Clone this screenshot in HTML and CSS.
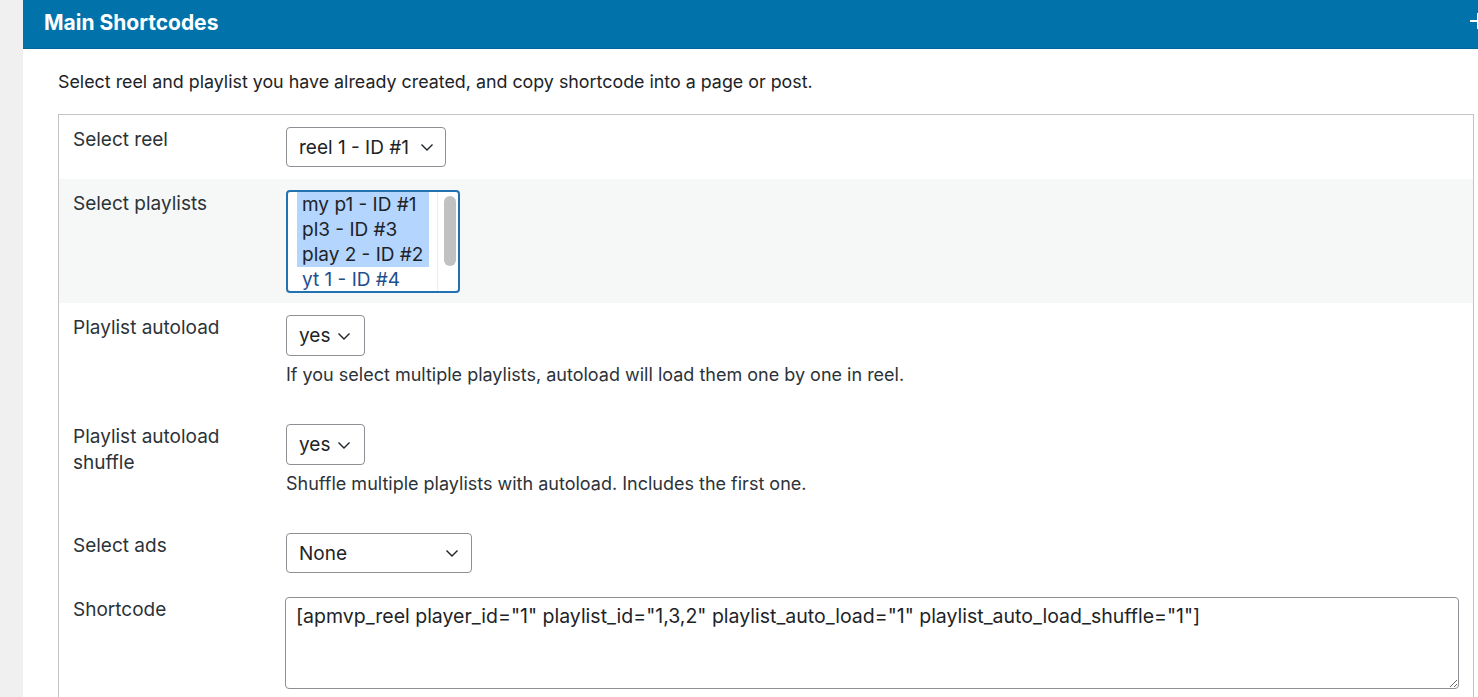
FILE: index.html
```html
<!DOCTYPE html>
<html lang="en">
<head>
    <meta charset="UTF-8">
    <meta name="viewport" content="width=device-width, initial-scale=1.0">
    <title>Main Shortcodes</title>
    <link rel="stylesheet" href="styles.css">
</head>
<body>
    <div class="panel">
        <div class="panel-header">
            <h2>Main Shortcodes</h2>
            <svg class="toggle" width="20" height="20" viewBox="0 0 20 20">
                <path d="M10 2v16M2 10h16" stroke="#fff" stroke-width="2" fill="none"/>
            </svg>
        </div>

        <div class="panel-body">
            <p class="intro">Select reel and playlist you have already created, and copy shortcode into a page or post.</p>

            <table class="form-table">
                <tr>
                    <th>Select reel</th>
                    <td>
                        <div class="select select-reel">
                            <span>reel 1 - ID #1</span>
                            <svg width="16" height="16" viewBox="0 0 16 16"><path d="M2.5 5.5l5.5 5.5 5.5-5.5" stroke="#1d2327" stroke-width="1.4" fill="none"/></svg>
                        </div>
                    </td>
                </tr>
                <tr class="alt">
                    <th>Select playlists</th>
                    <td>
                        <div class="multi">
                            <ul class="options">
                                <li class="selected">my p1 - ID #1</li>
                                <li class="selected">pl3 - ID #3</li>
                                <li class="selected">play 2 - ID #2</li>
                                <li>yt 1 - ID #4</li>
                            </ul>
                            <div class="scrollbar"><div class="thumb"></div></div>
                        </div>
                    </td>
                </tr>
                <tr>
                    <th>Playlist autoload</th>
                    <td>
                        <div class="select select-yes">
                            <span>yes</span>
                            <svg width="16" height="16" viewBox="0 0 16 16"><path d="M2.5 5.5l5.5 5.5 5.5-5.5" stroke="#1d2327" stroke-width="1.4" fill="none"/></svg>
                        </div>
                        <p class="description">If you select multiple playlists, autoload will load them one by one in reel.</p>
                    </td>
                </tr>
                <tr>
                    <th>Playlist autoload shuffle</th>
                    <td>
                        <div class="select select-yes">
                            <span>yes</span>
                            <svg width="16" height="16" viewBox="0 0 16 16"><path d="M2.5 5.5l5.5 5.5 5.5-5.5" stroke="#1d2327" stroke-width="1.4" fill="none"/></svg>
                        </div>
                        <p class="description">Shuffle multiple playlists with autoload. Includes the first one.</p>
                    </td>
                </tr>
                <tr>
                    <th>Select ads</th>
                    <td>
                        <div class="select select-ads">
                            <span>None</span>
                            <svg width="16" height="16" viewBox="0 0 16 16"><path d="M2.5 5.5l5.5 5.5 5.5-5.5" stroke="#1d2327" stroke-width="1.4" fill="none"/></svg>
                        </div>
                    </td>
                </tr>
                <tr>
                    <th>Shortcode</th>
                    <td>
                        <textarea class="shortcode">[apmvp_reel player_id="1" playlist_id="1,3,2" playlist_auto_load="1" playlist_auto_load_shuffle="1"]</textarea>
                    </td>
                </tr>
            </table>
        </div>
    </div>
</body>
</html>
```

FILE: styles.css
```css
html, body {
    overflow: hidden;
}
body {
    margin: 0;
    background: #f0f0f1;
    font-family: Inter, 'Noto Sans', sans-serif;
    font-size: 18px;
    color: #1d2327;
}
.panel {
    margin-left: 23px;
    width: 1486px;
    min-height: 697px;
    background: #fff;
}
.panel-header {
    display: flex;
    align-items: center;
    justify-content: space-between;
    height: 48px;
    padding: 0 21px;
    background: #0273aa;
    border-bottom: 1px solid #00669a;
}
.panel-header h2 {
    margin: 0;
    margin-top: -4px;
    font-size: 21px;
    font-weight: 700;
    color: #fff;
}
.toggle {
    margin-top: -7px;
}
.panel-body {
    padding: 0 35px;
}
.intro {
    margin: 0;
    padding: 21px 0 20px;
    line-height: 24px;
    font-size: 17.85px;
    color: #1d2327;
}
.form-table {
    width: 1416px;
    border: 1px solid #c3c4c7;
    border-collapse: collapse;
}
.form-table tr.alt {
    background: #f6f7f7;
}
.form-table th {
    width: 200px;
    padding: 12px 13px 12px 14px;
    text-align: left;
    vertical-align: top;
    font-size: 19px;
    font-weight: 400;
    line-height: 26px;
    color: #2c3338;
}
.form-table td {
    padding: 12px 14px 12px 10px;
    vertical-align: top;
}
.select {
    display: flex;
    align-items: center;
    justify-content: space-between;
    box-sizing: border-box;
    height: 40px;
    padding: 0 10px 0 12px;
    border: 1px solid #8c8f94;
    border-radius: 4px;
    background: #fff;
    font-size: 19px;
    line-height: 1;
}
.select-reel {
    width: 160px;
}
.select-yes {
    width: 79px;
    height: 41px;
    padding-right: 12px;
}
.select-ads {
    width: 186px;
    padding-right: 11px;
}
.description {
    margin: 8px 0 14px;
    font-size: 18px;
    line-height: 22px;
    color: #2c3338;
}
.multi {
    display: flex;
    box-sizing: border-box;
    width: 174px;
    height: 103px;
    margin: -1px 0 -2px;
    border: 2px solid #2271b1;
    border-radius: 4px;
    background: #fff;
    overflow: hidden;
}
.options {
    flex: 1;
    margin: 0;
    padding: 0 8px 0 9px;
    list-style: none;
}
.options li {
    padding-left: 5px;
    font-size: 19px;
    line-height: 25px;
    color: #1e4f8f;
    white-space: nowrap;
}
.options li.selected {
    background: #b4d5fe;
    color: #1d2327;
}
.scrollbar {
    width: 21px;
    border-left: 1px solid #ececec;
    padding: 4px 0 0 6px;
    box-sizing: border-box;
}
.thumb {
    width: 12px;
    height: 70px;
    border-radius: 6px;
    background: #c1c1c1;
}
.shortcode {
    display: block;
    box-sizing: border-box;
    width: 1174px;
    height: 92px;
    margin-left: -1px;
    padding: 7px 10px;
    border: 1px solid #8c8f94;
    border-radius: 4px;
    font-family: Inter, 'Noto Sans', sans-serif;
    font-size: 19.5px;
    line-height: 22px;
    color: #1d2327;
}
```
